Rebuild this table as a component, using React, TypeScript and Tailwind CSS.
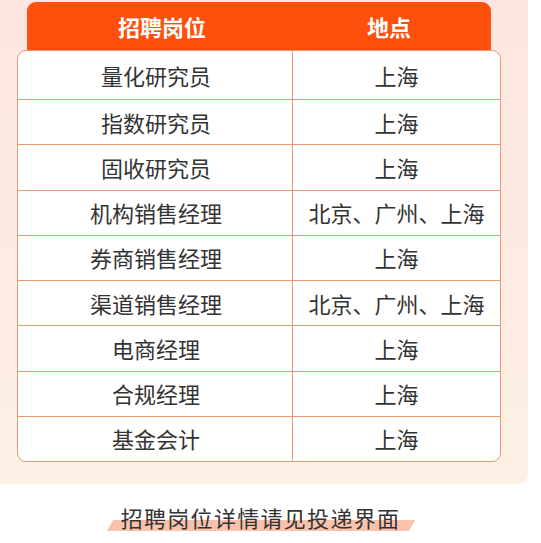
import React from 'react';

const jobs: [string, string][] = [
  ['量化研究员', '上海'],
  ['指数研究员', '上海'],
  ['固收研究员', '上海'],
  ['机构销售经理', '北京、广州、上海'],
  ['券商销售经理', '上海'],
  ['渠道销售经理', '北京、广州、上海'],
  ['电商经理', '上海'],
  ['合规经理', '上海'],
  ['基金会计', '上海'],
];

export default function App() {
  return (
    <div
      className="h-[543px] w-[541px] overflow-hidden bg-white"
      style={{ fontFamily: '"Noto Sans CJK SC", "Noto Sans", sans-serif' }}
    >
      {/* pink panel */}
      <div className="w-[528px] rounded-br-[10px] bg-gradient-to-b from-[#fde6e2] to-[#fdf0e4] pl-[17px] pr-[27px] pt-[2px] pb-[22px]">
        <div className="mx-[10px] -mb-[10px] h-[58px] rounded-t-[9px] bg-[#fe4f0c]">
          <div className="flex h-[48px] items-center text-[22px] font-bold text-white">
            <div className="w-[266px] pl-[4px] text-center">招聘岗位</div>
            <div className="flex-1 pr-[6px] text-center">地点</div>
          </div>
        </div>

        <div className="relative overflow-hidden rounded-[9px] border border-[#e69a74] bg-white">
          {jobs.map(([name, place], i) => (
            <div
              key={name}
              className={
                i === 0
                  ? 'flex h-[48px] items-center text-[22px] text-[#333333]'
                  : 'flex h-[45.25px] items-center border-t border-[#e69a74] text-[22px] text-[#333333]'
              }
            >
              <div className="flex h-full w-[275px] items-center justify-center border-r border-[#e69a74] pl-[2px]">
                {name}
              </div>
              <div className="flex-1 text-center">{place}</div>
            </div>
          ))}
        </div>
      </div>

      {/* caption */}
      <div className="flex justify-center pr-[20px] pt-[18px]">
        <div className="relative inline-block px-[11px]">
          <div className="absolute bottom-[1px] left-0 right-0 h-[11px] -skew-x-[30deg] bg-[#f8c2ad]" />
          <span className="relative text-[22px] leading-[30px] tracking-[1.3px] text-[#333333]">
            招聘岗位详情请见投递界面
          </span>
        </div>
      </div>
    </div>
  );
}
